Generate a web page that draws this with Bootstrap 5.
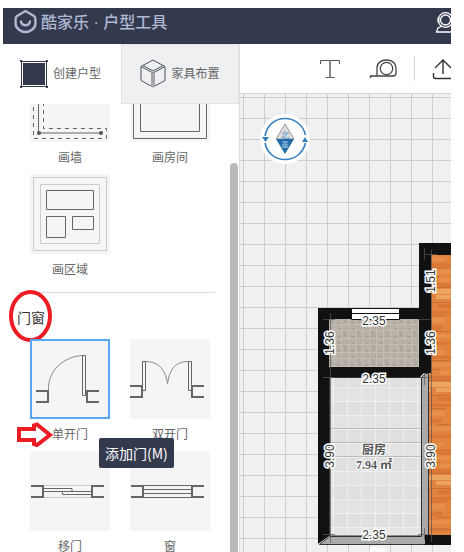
<!DOCTYPE html>
<html lang="zh-CN">
<head>
<meta charset="utf-8">
<meta name="viewport" content="width=device-width, initial-scale=1">
<title>酷家乐 · 户型工具</title>
<link href="https://cdn.jsdelivr.net/npm/bootstrap@5.3.0/dist/css/bootstrap.min.css" rel="stylesheet">
<style>
body { font-family: "Liberation Sans", "Noto Sans CJK SC", sans-serif; font-size: 12px; background: #fff; color: #666; }
.app { height: 100vh; padding: 8px 13px 0 3px; }
.topbar { height: 36px; background: #343a4e; color: #b0b8d4; padding-left: 10px; }
.brand { font-size: 16px; line-height: 30px; font-weight: 500; color: #b0b8d4; gap: 4px; }
.brand svg { margin-left: 1px; }
.side { width: 237px; border-right: 1px solid #dedede; }
.mode { height: 60px; border-radius: 0; font-size: 12px; color: #666; padding: 0; gap: 5px; }
.mode.making { padding-right: 3px; }
.mode.other { background: #eff0f2; border: 1px solid #e4e4e6; }
.library { padding-left: 27px; }
.tiles { display: grid; grid-template-columns: 80px 80px; column-gap: 20px; }
.tiles.scrolled { margin-top: -42px; }
.tile { border: 0; padding: 0; background: none; color: #666; font-size: 12px; line-height: 32px; }
.tile > svg:first-child { display: block; background: #f5f5f5; }
.tile.active > svg:first-child { outline: 2px solid #58a5f3; outline-offset: -2px; }
.rule { height: 1px; background: #dcdcdc; margin: 6px 24px 13px -15px; }
.group-title { font-size: 14px; line-height: 24px; margin: 0 0 9px -13px; color: #333; font-weight: 400; }
.ring { left: -11px; top: -17px; }
.arrow { left: -14px; top: 82px; }
.tip { left: 96px; top: 394px; background: #343a4e; color: #fff; font-size: 14px; line-height: 30px; padding: 0 6px; border-radius: 2px; white-space: nowrap; font-family: "Noto Sans CJK SC", sans-serif; }
.thumb { right: 1px; top: 119px; bottom: 0; width: 8px; background: #bababa; border-radius: 4px 4px 0 0; }
.tools { height: 50px; border-bottom: 1px solid #d6d6d6; padding-left: 80px; }
.tools button { border: 0; background: none; padding: 0; }
.split { width: 1px; height: 25px; background: #d4d4d4; margin: 0 17px 0 12px; }
.board { background-color: #eff0f2; background-image: linear-gradient(#cbcdcf 1px, transparent 1px), linear-gradient(90deg, #cbcdcf 1px, transparent 1px); background-size: 21px 21px; background-position: 3px 3px; }
.plan { left: 0; top: 0; }
.compass { left: 20px; top: 20px; border: 0; padding: 0; background: none; }
.dim text { font-family: "Liberation Sans", sans-serif; font-size: 12px; fill: #333; stroke: #fff; stroke-width: 3px; paint-order: stroke; text-anchor: middle; }
.room { font-family: "Liberation Serif", "Noto Sans CJK SC", serif; font-weight: 700; font-size: 12px; fill: #555; text-anchor: middle; stroke: #fff; stroke-width: 2px; paint-order: stroke; }
</style>
<script src="https://cdn.jsdelivr.net/npm/bootstrap@5.3.0/dist/js/bootstrap.bundle.min.js"></script>
</head>
<body>
<div class="app d-flex flex-column overflow-hidden">
  <header class="topbar d-flex align-items-start justify-content-between flex-shrink-0 overflow-hidden">
    <a href="#" class="brand d-flex text-decoration-none">
      <svg width="23" height="28" viewBox="0 0 23 28" fill="none" stroke="#b0b8d4" stroke-width="2.4" stroke-linejoin="round"><path d="M11.500 3 3 8Q1.600 9 1.600 11v5c0 4 5 8 9.900 8s9.900-4 9.900-8v-5q0-2-1.400-3z"/><path d="M7 13.500c1 5 8 5 9 0" stroke-linecap="round"/></svg>
      <span>酷家乐 · 户型工具</span>
    </a>
    <button class="border-0 bg-transparent p-0 overflow-hidden" aria-label="客服">
      <svg class="d-block" width="16" height="26" viewBox="0 0 16 26" fill="none" stroke="#fff" stroke-width="1.300"><circle cx="10.500" cy="12" r="5"/><circle cx="10.500" cy="12" r="7.300"/><path d="M7 18l-4 2-1.500 4H16"/><path d="M3.500 9.500v5" stroke-width="2"/></svg>
    </button>
  </header>
  <div class="d-flex flex-grow-1 overflow-hidden">
    <aside class="side flex-shrink-0 d-flex flex-column position-relative">
      <div class="d-flex flex-shrink-0">
        <button class="mode making btn w-50 d-flex align-items-center justify-content-center">
          <svg width="28" height="28" viewBox="0 0 28 28"><path d="M1.500 1.500h25v25h-25z" fill="none" stroke="#343a4e"/><path d="M3 3h22v22H3zM0 0h2v2H0zM26 0h2v2h-2zM0 26h2v2H0zM26 26h2v2h-2z" fill="#343a4e"/></svg>
          创建户型
        </button>
        <button class="mode other btn w-50 d-flex align-items-center justify-content-center">
          <svg width="26" height="30" viewBox="0 0 26 30" fill="none" stroke="#4b5061" stroke-linejoin="round"><path d="M13 1 25 7.500v14L13 28 1 21.500v-14zM1 7.500 13 14l12-6.500M3 6.500 13 12l10-5.500"/><path d="M11.500 14h3v13.500h-3z" fill="#a5a6ab" stroke="#a5a6ab"/></svg>
          家具布置
        </button>
      </div>
      <div class="library flex-grow-1 overflow-hidden">
        <div class="tiles scrolled">
          <button class="tile"><svg width="80" height="80" fill="none" stroke="#666"><path d="M8.500 4v67h62"/><path d="M3.500 45v31.500h73V66.500H13.500V4" stroke-dasharray="4 4"/><circle cx="9" cy="71" r="2" fill="#555" stroke="none"/><circle cx="71" cy="71" r="2" fill="#555" stroke="none"/></svg>画墙</button>
          <button class="tile"><svg width="80" height="80" fill="none" stroke="#666"><path d="M3.500 3.500h73v73h-73zM10.500 10.500h59v59h-59z"/></svg>画房间</button>
          <button class="tile"><svg width="80" height="80" fill="none" stroke="#666"><path d="M3.500 3.500h73v73h-73zM10.500 10.500h59v59h-59z" stroke="#ccc"/><path d="M16.500 16.500h47v19h-47zM16.500 42.500h19v21h-19zM42.500 42.500h21v13h-21z"/></svg>画区域</button>
        </div>
        <div class="rule"></div>
        <h2 class="group-title position-relative">门窗
          <svg class="ring position-absolute" width="46" height="54" fill="none" stroke="#ed1c24" stroke-width="4"><ellipse cx="24.500" cy="27" rx="19.500" ry="24"/></svg>
        </h2>
        <div class="tiles">
          <button class="tile active position-relative">
            <svg width="80" height="80" fill="none" stroke="#666"><path d="M18.500 52C17 32 34 17 53 16.500" stroke="#888"/><path d="M52.500 16.500h3v40h-3z"/><path d="M6 52h12v11H6M69 52H57v11h12" stroke-width="2"/></svg>单开门
            <svg class="arrow position-absolute" width="38" height="28" fill="none" stroke="#ed1c24" stroke-width="4"><path d="M3 8h15V4.500l3-1L34 14 21 24l-3-1v-4H3z"/></svg>
          </button>
          <button class="tile"><svg width="80" height="80" fill="none" stroke="#666"><path d="M15 22.500c12 0 20 6 22.500 22 2.500-16 9-22 21.500-22" stroke="#888"/><path d="M12.500 22.500h3v29h-3zM58.500 22.500h3v29h-3z"/><path d="M0 47h12v11H0M74 47H62v11h12" stroke-width="2"/></svg>双开门</button>
          <button class="tile"><svg width="80" height="80" fill="none" stroke="#666"><path d="M14 34.500h48M14 46.500h48" stroke="#ccc"/><path d="M14 37.500h28v3H14M61 43.500H32.500v-3H61"/><path d="M1 35h12v11H1M74 35H62v11h12" stroke-width="2"/></svg>移门</button>
          <button class="tile"><svg width="80" height="80" fill="none" stroke="#666"><path d="M14 34.500h48M14 38.500h48M14 42.500h48M14 46.500h48"/><path d="M1 35h12v11H1M74 35H62v11h12" stroke-width="2"/></svg>窗</button>
        </div>
      </div>
      <div class="thumb position-absolute"></div>
      <div class="tip position-absolute" role="tooltip">添加门(M)</div>
    </aside>
    <main class="flex-grow-1 d-flex flex-column overflow-hidden">
      <div class="tools d-flex align-items-center flex-shrink-0 overflow-hidden">
        <button class="flex-shrink-0" aria-label="文字"><svg class="d-block" width="20" height="20" fill="none" stroke="#555"><path d="M.5 5V1.500h19V5M5.500 18.500h9"/><path d="M10 1.500v17" stroke="#888" stroke-width="2"/></svg></button>
        <button class="ms-4 ps-1 flex-shrink-0" aria-label="测量"><svg class="d-block" width="34" height="22" fill="none" stroke="#444" stroke-width="1.300"><path d="M2.500 20v-2H25q3 0 3-3v-5C28 5 24 2 18.500 2S9 5 9 10v8"/><circle cx="18.500" cy="10.500" r="6.200"/></svg></button>
        <div class="split flex-shrink-0"></div>
        <button class="flex-shrink-0" aria-label="导出"><svg class="d-block" width="24" height="22" fill="none" stroke="#333" stroke-width="1.400"><path d="M11 16V2M3 10l8-8 8 8M1.500 15v3.500q0 2 2 2H22"/></svg></button>
      </div>
      <div class="board flex-grow-1 position-relative overflow-hidden">
        <svg class="plan position-absolute" width="211" height="458" viewBox="240 94 211 458">
          <defs>
            <pattern id="planks" width="22" height="93" x="430" y="254" patternUnits="userSpaceOnUse">
              <path fill="#e0843f" d="M0 0h22v93H0z"/>
              <path fill="#e68f4a" d="M0 3h14v4H0zM0 16h22v4H0zM10 24h12v4H10zM0 64h15v5H0zM0 80h22v4H0z"/>
              <path fill="#d87736" d="M0 9h22v3H0zM0 29h22v4H0zM8 50h14v4H8zM0 57h22v3H0zM0 72h12v4H0zM0 88h22v3H0z"/>
              <path fill="#eba561" d="M0 35h22v5H0zM6 41h16v4H6z"/>
              <path stroke="#c96f33" fill="none" d="M0 13.500h22M0 22.500h10M0 33.500h22M0 48.500h22M0 61.500h16M6 77.500h16"/>
            </pattern>
            <pattern id="stone" width="14" height="14" x="329" y="319" patternUnits="userSpaceOnUse">
              <path fill="#b7b0a7" d="M0 0h14v14H0z"/><path fill="#aca59d" d="M1 1h3v3H1zM8 3h4v2H8zM4 7h2v4H4zM9 9h3v3H9zM0 12h3v2H0z"/><path fill="#c3bdb4" d="M5 0h1v14H5zM0 5h14v1H0zM12 0h1v14h-1zM0 11h14v1H0z"/>
            </pattern>
            <pattern id="ceramic" width="28" height="28" x="333" y="387" patternUnits="userSpaceOnUse">
              <path fill="#e3e3e3" d="M0 0h28v28H0z"/><path fill="#dfdfdf" d="M0 14h28v14H0z"/><path stroke="#efefef" fill="none" d="M0 .5h28M0 14.500h28M.5 0v28M14.500 0v28"/>
            </pattern>
          </defs>
          <path fill="#111" d="M419 243h32v12h-20v118h-7l-4 4h-91v159l-11 8V308h101z"/>
          <path fill="url(#planks)" d="M431 255h20v280h-22V373h2z"/>
          <path fill="url(#stone)" d="M329 319h90v48h-90z"/>
          <path fill="url(#ceramic)" stroke="#333" d="M329.500 377.500h92v158.500h-92z"/>
          <path stroke="#bbb" d="M330 428.500h91M330 442.500h91M330 456.500h91"/>
          <path fill="#aaa" stroke="#333" d="M421.500 377.500l4-4h3v162h-3v9h-106l10-8h92z"/>
          <path fill="#111" d="M425 535h26v10h-26z"/>
          <path fill="#fff" stroke="#111" d="M351.500 308.500h48v11h-48zM351.500 313.500h48"/>
          <path fill="none" stroke="#555" opacity=".7" d="M330.500 313v230M431.500 250v292M323 319.500h12M323 377.500h12M323 534.500h12M418 319.500h12M418 377.500h12M418 534.500h12M425 254.500h12M424.500 248v12M424.500 373v12M424.500 528v12"/>
          <g class="dim">
            <text x="374" y="325">2.35</text><text x="374" y="383">2.35</text><text x="374" y="539">2.35</text>
            <text transform="translate(334 343) rotate(-90)">1.36</text><text transform="translate(435 343) rotate(-90)">1.36</text>
            <text transform="translate(435 281) rotate(-90)">1.51</text><text transform="translate(334 456) rotate(-90)">3.90</text><text transform="translate(435 456) rotate(-90)">3.90</text>
          </g>
          <text class="room" x="374" y="454">厨房</text>
          <text class="room" x="374" y="469">7.94 ㎡</text>
          <g fill="none" stroke="#fff" stroke-width="3"><circle cx="374" cy="551" r="3"/><circle cx="381" cy="552" r="3"/></g>
        </svg>
        <button class="compass position-absolute" aria-label="指北针">
          <svg class="d-block" width="50" height="50" viewBox="0 0 50 50"><circle cx="25" cy="25" r="25" fill="#fff"/><path d="M5 22C7 11 15 4.500 25 4.500S43 11 45.500 21M5 29c2 10 10 16.500 20 16.500S43 39 45.500 29" fill="none" stroke="#337fbd" stroke-width="1.600"/><path d="M2 23h7l-3.500 5zM42 28h6l-3-5z" fill="#337fbd"/><path d="M25 10 34 25H16z" fill="#ddd" stroke="#999"/><path d="M16 25h18l-9 15z" fill="#236ba7"/><text x="25" y="24" font-size="8" text-anchor="middle" fill="#4c91c9">北</text><text x="25" y="33" font-size="7" text-anchor="middle" fill="#a8cdea">墨</text></svg>
        </button>
      </div>
    </main>
  </div>
</div>
</body>
</html>
